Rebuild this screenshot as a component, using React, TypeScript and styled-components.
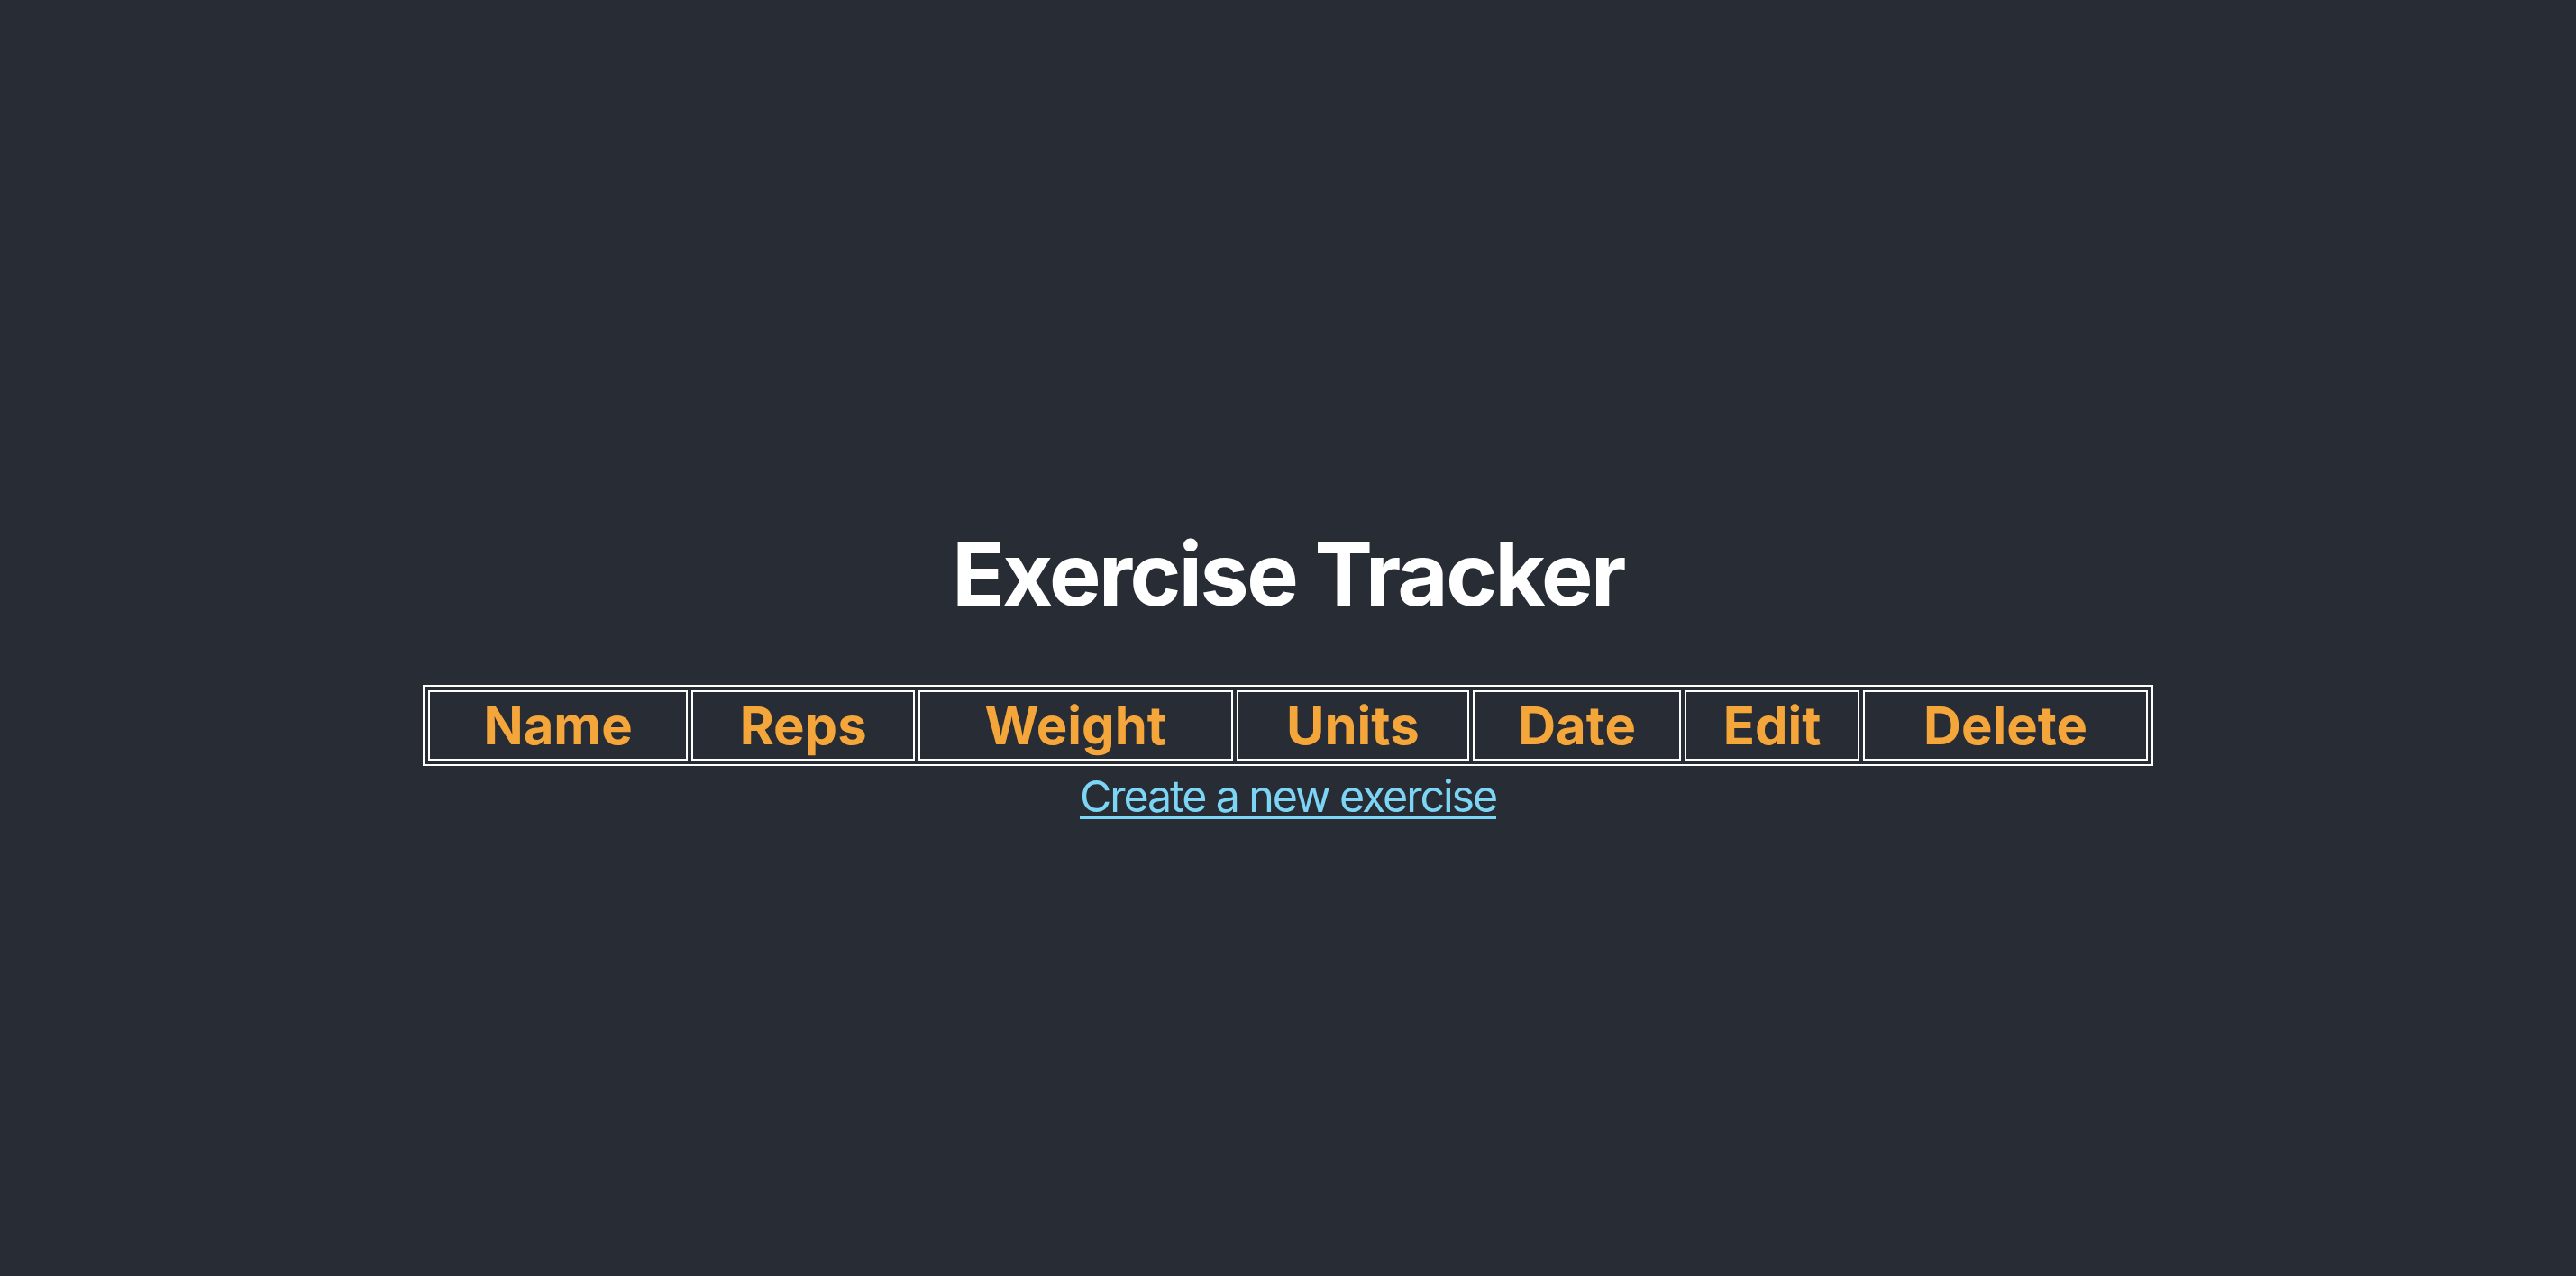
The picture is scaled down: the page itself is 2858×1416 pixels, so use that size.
import * as React from "react";
import styled, { createGlobalStyle } from "styled-components";

const columns = ["Name", "Reps", "Weight", "Units", "Date", "Edit", "Delete"];

function App() {
  return (
    <>
      <GlobalStyle />
      <Page>
        <Header>
          <Title>Exercise Tracker</Title>
          <ExerciseTable>
            <thead>
              <tr>
                {columns.map((c) => (
                  <HeadCell key={c}>{c}</HeadCell>
                ))}
              </tr>
            </thead>
            <tbody />
          </ExerciseTable>
          <CreateLink href="#create">Create a new exercise</CreateLink>
        </Header>
      </Page>
    </>
  );
}

const GlobalStyle = createGlobalStyle`
  html, body {
    margin: 0;
    padding: 0;
    background: #282c34;
  }
  body {
    font-family: Inter, "Noto Sans", sans-serif;
    -webkit-font-smoothing: antialiased;
  }
`;

const Page = styled.div`
  text-align: center;
`;

const Header = styled.header`
  background-color: #282c34;
  min-height: 100vh;
  box-sizing: border-box;
  padding-top: 10px;
  display: flex;
  flex-direction: column;
  align-items: center;
  justify-content: center;
  font-size: 48.32px;
  color: #ffffff;
`;

const Title = styled.h1`
  font-size: 96.64px;
  font-weight: 700;
  letter-spacing: -2.5px;
  margin: 64.7px 0;
`;

const ExerciseTable = styled.table`
  width: 1920px;
  border: 2px solid #ffffff;
  border-spacing: 4px;
  border-collapse: separate;
`;

const HeadCell = styled.th`
  border: 2px solid #ffffff;
  padding: 2px;
  font-size: 58px;
  font-weight: 700;
  color: #f4a63a;
`;

const CreateLink = styled.a`
  color: #7dd5f6;
  letter-spacing: -2.1px;
  margin-top: 4px;
  text-decoration: underline;
  text-decoration-thickness: 3px;
  text-underline-offset: 5px;
`;

export default App;
